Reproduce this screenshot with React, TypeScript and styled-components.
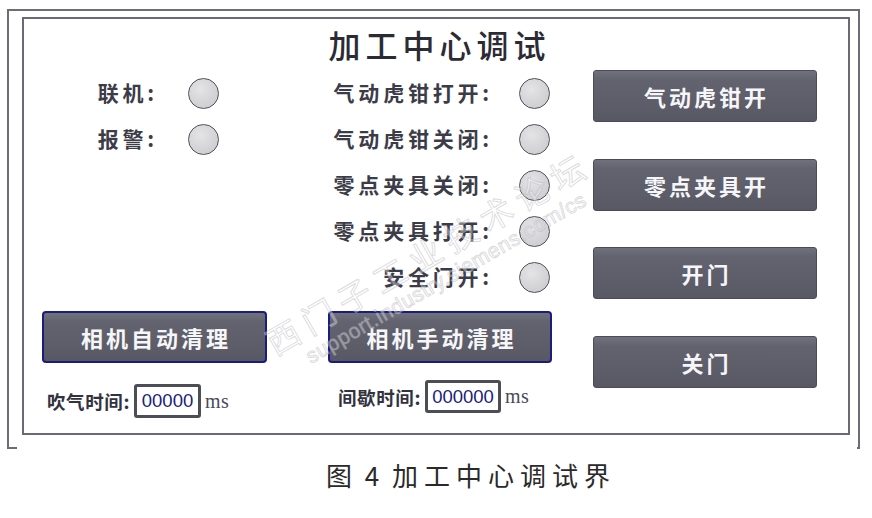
import React from "react";
import styled, { createGlobalStyle } from "styled-components";

const GlobalStyle = createGlobalStyle`
  html, body { margin: 0; padding: 0; background: #ffffff; }
  body { font-family: "Noto Sans CJK SC", "Noto Sans", sans-serif; }
  * { box-sizing: border-box; }
`;

const CJK = `"Noto Sans CJK SC", "Noto Sans", sans-serif`;

const Page = styled.div`
  position: relative;
  width: 872px;
  height: 518px;
  overflow: hidden;
  background: #ffffff;
`;

const OuterFrame = styled.div`
  position: relative;
  margin: 9px 0 0 7px;
  width: 853px;
  height: 440px;
  border: 2px solid #6d6d77;
  border-bottom: none;
  padding: 6px 0 0 13px;
  &::before,
  &::after {
    content: "";
    position: absolute;
    bottom: 0;
    height: 2px;
    background: #6d6d77;
  }
  &::before { left: -2px; width: 10px; }
  &::after { right: -2px; width: 3px; }
`;

const InnerFrame = styled.div`
  width: 828px;
  height: 418px;
  border: 2px solid #6a6a74;
  display: flex;
  flex-direction: column;
`;

const Title = styled.div`
  height: 51px;
  line-height: 51px;
  text-align: center;
  padding-left: 7px;
  font-family: ${CJK};
  font-size: 32px;
  font-weight: 500;
  letter-spacing: 5px;
  color: #2b2b36;
`;

const Body = styled.div`
  display: grid;
  grid-template-columns: 286px 259px 224px;
  grid-template-rows: 230px auto;
  row-gap: 11px;
`;

const StatusList = styled.div`
  display: flex;
  flex-direction: column;
`;

const StatusRow = styled.div<{ $labelWidth: number; $gap: number }>`
  height: 46px;
  display: grid;
  grid-template-columns: ${(p) => p.$labelWidth}px 31px;
  column-gap: ${(p) => p.$gap}px;
  align-items: center;
`;

const Label = styled.span`
  text-align: right;
  font-family: ${CJK};
  font-size: 21px;
  font-weight: 700;
  letter-spacing: 3.8px;
  line-height: 28px;
  margin-top: -3px;
  color: #3c3c48;
  white-space: nowrap;
`;

const Lamp = styled.span`
  display: block;
  width: 31px;
  height: 31px;
  border-radius: 50%;
  border: 1.5px solid #50505a;
  background: radial-gradient(circle at 40% 35%, #e4e4e6 0%, #d3d3d6 60%, #c9c9cd 100%);
`;

const Group = styled.div<{ $btnLeft: number; $inputLeft: number; $inputTop: number }>`
  display: flex;
  flex-direction: column;
  padding-left: ${(p) => p.$btnLeft}px;
  & > div:last-child {
    margin-left: ${(p) => p.$inputLeft - p.$btnLeft}px;
    margin-top: ${(p) => p.$inputTop}px;
  }
`;

const PanelButton = styled.button<{ $outlined?: boolean; $width?: number }>`
  width: ${(p) => p.$width ?? 224}px;
  height: 52px;
  padding: 0;
  border-radius: ${(p) => (p.$outlined ? 4 : 3)}px;
  border: ${(p) => (p.$outlined ? "2px solid #1b1b82" : "1px solid #4b4c57")};
  background: linear-gradient(180deg, #70717d 0%, #62636f 18%, #5c5d69 70%, #575864 100%);
  color: #f6f6f8;
  font-family: ${CJK};
  font-size: 22px;
  font-weight: 700;
  letter-spacing: 3px;
  text-indent: 3px;
  display: flex;
  align-items: center;
  justify-content: center;
  cursor: pointer;
`;

const InputRow = styled.div`
  display: flex;
  align-items: center;
`;

const InputLabel = styled.span`
  font-family: ${CJK};
  font-size: 18.5px;
  font-weight: 700;
  color: #333340;
  white-space: nowrap;
  letter-spacing: 0.6px;
`;

const NumBox = styled.div<{ $width: number; $height: number }>`
  width: ${(p) => p.$width}px;
  height: ${(p) => p.$height}px;
  margin-left: 4px;
  border: 3px solid #4d4d56;
  border-radius: 3px;
  background: #ffffff;
  display: flex;
  align-items: center;
  justify-content: center;
  font-family: "Liberation Sans", Arial, sans-serif;
  font-size: 18.5px;
  color: #1c1c7c;
`;

const Unit = styled.span`
  margin-left: 4px;
  font-family: "Liberation Serif", "Times New Roman", serif;
  font-size: 20px;
  color: #4a4a56;
  letter-spacing: 0.5px;
`;

const RightColumn = styled.div`
  grid-column: 3;
  grid-row: 1 / span 2;
  margin-left: 24px;
  display: flex;
  flex-direction: column;
  gap: 36.5px;
`;

const Caption = styled.div`
  margin-top: 9px;
  padding-left: 70px;
  text-align: center;
  font-family: ${CJK};
  font-size: 26px;
  font-weight: 400;
  line-height: 34px;
  letter-spacing: 6px;
  word-spacing: -5px;
  color: #2a2a2a;
`;

const Watermark = styled.div<{ $x: number; $y: number; $size: number; $spacing: number }>`
  position: absolute;
  left: ${(p) => p.$x}px;
  top: ${(p) => p.$y}px;
  transform: translate(-50%, -50%) rotate(-30deg);
  white-space: nowrap;
  font-size: ${(p) => p.$size}px;
  letter-spacing: ${(p) => p.$spacing}px;
  color: rgba(255, 255, 255, 0.35);
  -webkit-text-stroke: 1px rgba(170, 170, 175, 0.42);
  pointer-events: none;
`;

const WatermarkCn = styled(Watermark)`
  font-family: ${CJK};
  font-weight: 400;
`;

const WatermarkUrl = styled(Watermark)`
  font-family: "Liberation Sans", Arial, sans-serif;
  font-weight: 400;
`;

type Status = { label: string };

const leftStatus: Status[] = [{ label: "联机:" }, { label: "报警:" }];
const midStatus: Status[] = [
  { label: "气动虎钳打开:" },
  { label: "气动虎钳关闭:" },
  { label: "零点夹具关闭:" },
  { label: "零点夹具打开:" },
  { label: "安全门开:" },
];
const rightButtons = ["气动虎钳开", "零点夹具开", "开门", "关门"];

export default function App() {
  return (
    <Page>
      <GlobalStyle />
      <OuterFrame>
        <InnerFrame>
          <Title>加工中心调试</Title>
          <Body>
            <StatusList>
              {leftStatus.map((s) => (
                <StatusRow key={s.label} $labelWidth={134} $gap={30}>
                  <Label>{s.label}</Label>
                  <Lamp />
                </StatusRow>
              ))}
            </StatusList>
            <StatusList>
              {midStatus.map((s) => (
                <StatusRow key={s.label} $labelWidth={183} $gap={26}>
                  <Label>{s.label}</Label>
                  <Lamp />
                </StatusRow>
              ))}
            </StatusList>
            <RightColumn>
              {rightButtons.map((b) => (
                <PanelButton key={b}>{b}</PanelButton>
              ))}
            </RightColumn>
            <Group $btnLeft={18} $inputLeft={23} $inputTop={21}>
              <PanelButton $outlined $width={225}>相机自动清理</PanelButton>
              <InputRow>
                <InputLabel>吹气时间:</InputLabel>
                <NumBox $width={67} $height={34}>00000</NumBox>
                <Unit>ms</Unit>
              </InputRow>
            </Group>
            <Group $btnLeft={18} $inputLeft={28} $inputTop={17}>
              <PanelButton $outlined $width={224}>相机手动清理</PanelButton>
              <InputRow>
                <InputLabel>间歇时间:</InputLabel>
                <NumBox $width={76} $height={33}>000000</NumBox>
                <Unit>ms</Unit>
              </InputRow>
            </Group>
          </Body>
        </InnerFrame>
      </OuterFrame>
      <Caption>图 4 加工中心调试界</Caption>
      <WatermarkCn $x={428} $y={252} $size={33} $spacing={8}>西门子工业技术论坛</WatermarkCn>
      <WatermarkUrl $x={446} $y={278} $size={21} $spacing={0.5}>support.industry.siemens.com/cs</WatermarkUrl>
    </Page>
  );
}
